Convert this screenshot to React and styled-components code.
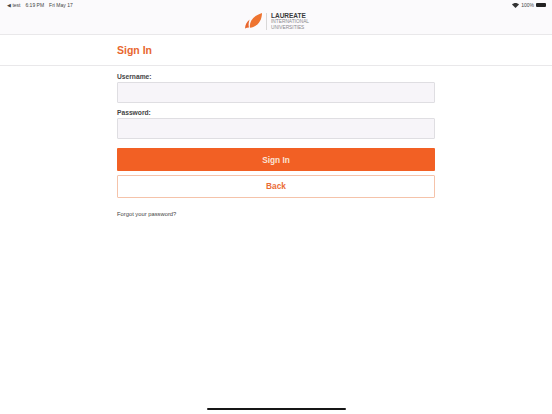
import React from "react";
import styled, { createGlobalStyle } from "styled-components";

const GlobalStyle = createGlobalStyle`
  html, body {
    margin: 0;
    padding: 0;
    background: #ffffff;
  }
  body {
    font-family: "Liberation Sans", Arial, sans-serif;
  }
`;

const Page = styled.div`
  position: relative;
  width: 552px;
  height: 414px;
  overflow: hidden;
  background: #ffffff;
`;

const TopArea = styled.div`
  height: 34px;
  background: #fbfafc;
  border-bottom: 1px solid #e9e8ea;
`;

const StatusBar = styled.div`
  display: flex;
  justify-content: space-between;
  align-items: center;
  height: 10px;
  padding: 0 6px 0 7px;
  font-size: 5px;
  color: #444;
`;

const StatusGroup = styled.div`
  display: flex;
  align-items: center;
  gap: ${(p) => p.$gap || 4}px;
`;

const Battery = styled.div`
  width: 10px;
  height: 4px;
  border-radius: 1px;
  background: #222;
`;

const LogoRow = styled.div`
  display: flex;
  justify-content: center;
  align-items: center;
  height: 18px;
  margin-top: 2px;
  padding-left: 2px;
`;

const LogoDivider = styled.div`
  width: 1px;
  height: 17px;
  margin: 0 4px;
  background: #d9d8d8;
`;

const LogoText = styled.div`
  display: flex;
  flex-direction: column;
  line-height: 5.4px;
  font-size: 4.8px;
  color: #8a898d;
`;

const LogoTitle = styled.span`
  font-size: 6.5px;
  line-height: 7px;
  font-weight: 700;
  color: #3a3a3c;
`;

const TitleRow = styled.div`
  box-sizing: border-box;
  height: 31px;
  padding: 0 0 1px 117px;
  display: flex;
  align-items: center;
  border-bottom: 1px solid #e9e8ea;
`;

const Title = styled.h1`
  margin: 0;
  font-size: 10.5px;
  font-weight: 700;
  color: #e8672f;
`;

const Form = styled.div`
  display: flex;
  flex-direction: column;
  width: 318px;
  margin: 5px 0 0 117px;
`;

const Label = styled.label`
  height: 10px;
  line-height: 12px;
  font-size: 6.7px;
  font-weight: 700;
  color: #444;
  margin-bottom: 1px;
`;

const Input = styled.input`
  box-sizing: border-box;
  width: 100%;
  height: 21px;
  margin-bottom: ${(p) => p.$mb}px;
  padding: 0 4px;
  background: #f7f5f9;
  border: 1px solid #dfdee2;
  border-radius: 1px;
  outline: none;
`;

const Button = styled.button`
  box-sizing: border-box;
  width: 100%;
  height: 23px;
  margin-bottom: 4px;
  padding: 0 0 ${(p) => (p.$outline ? 1 : 0)}px;
  font-family: inherit;
  font-size: 8.3px;
  font-weight: 700;
  border-radius: 1px;
  color: ${(p) => (p.$outline ? "#ea6c36" : "#fbe3d6")};
  background: ${(p) => (p.$outline ? "#ffffff" : "#f26024")};
  border: ${(p) => (p.$outline ? "1px solid #f5c3aa" : "none")};
`;

const ForgotLink = styled.div`
  margin-top: 9px;
  font-size: 5.8px;
  line-height: 7px;
  color: #444;
`;

const HomeBar = styled.div`
  position: absolute;
  left: 207px;
  bottom: 4px;
  width: 139px;
  height: 2px;
  border-radius: 1px;
  background: #161616;
`;

const Leaf = () => (
  <svg width="17" height="16" viewBox="0 0 17 16">
    <path d="M0 15.5C0.3 12 1.6 9 4.6 6.6 3.5 9.5 3.3 12.6 4 14.6 2.6 14.6 1.2 14.9 0 15.5Z" fill="#e8662d" />
    <path d="M5 14.8C4 9.5 7.5 3 17 0 16.8 7 13.5 13.5 5 14.8Z" fill="#ee7430" />
  </svg>
);

const Wifi = () => (
  <svg width="7" height="5" viewBox="0 0 7 5">
    <path d="M0 1.6C2 -0.4 5 -0.4 7 1.6L3.5 5Z" fill="#333" />
  </svg>
);

export default function App() {
  return (
    <Page>
      <GlobalStyle />
      <TopArea>
        <StatusBar>
          <StatusGroup $gap={5}>
            <span>◀ test</span>
            <span>6:19 PM</span>
            <span>Fri May 17</span>
          </StatusGroup>
          <StatusGroup $gap={2}>
            <Wifi />
            <span>100%</span>
            <Battery />
          </StatusGroup>
        </StatusBar>
        <LogoRow>
          <Leaf />
          <LogoDivider />
          <LogoText>
            <LogoTitle>LAUREATE</LogoTitle>
            <span>INTERNATIONAL</span>
            <span>UNIVERSITIES</span>
          </LogoText>
        </LogoRow>
      </TopArea>
      <TitleRow>
        <Title>Sign In</Title>
      </TitleRow>
      <Form>
        <Label>Username:</Label>
        <Input $mb={4} />
        <Label>Password:</Label>
        <Input $mb={9} />
        <Button>Sign In</Button>
        <Button $outline>Back</Button>
        <ForgotLink>Forgot your password?</ForgotLink>
      </Form>
      <HomeBar />
    </Page>
  );
}
